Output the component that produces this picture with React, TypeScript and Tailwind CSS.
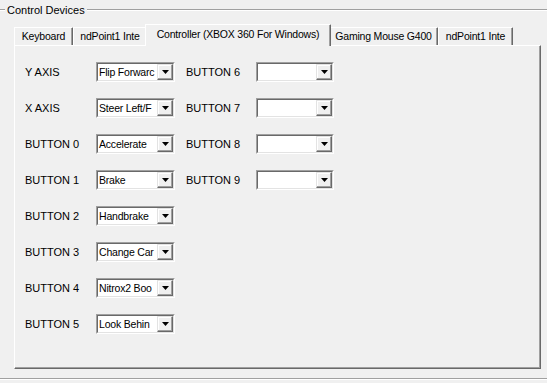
import React from 'react';

type Row = { label: string; value: string };

const LEFT_ROWS: Row[] = [
  { label: 'Y AXIS', value: 'Flip Forwarc' },
  { label: 'X AXIS', value: 'Steer Left/F' },
  { label: 'BUTTON 0', value: 'Accelerate' },
  { label: 'BUTTON 1', value: 'Brake' },
  { label: 'BUTTON 2', value: 'Handbrake' },
  { label: 'BUTTON 3', value: 'Change Car' },
  { label: 'BUTTON 4', value: 'Nitrox2 Boo' },
  { label: 'BUTTON 5', value: 'Look Behin' },
];

const RIGHT_ROWS: Row[] = [
  { label: 'BUTTON 6', value: '' },
  { label: 'BUTTON 7', value: '' },
  { label: 'BUTTON 8', value: '' },
  { label: 'BUTTON 9', value: '' },
];

const TABS = [
  { label: 'Keyboard', width: 'w-[59px]' },
  { label: 'ndPoint1 Inte', width: 'w-[74px]' },
  { label: 'Controller (XBOX 360 For Windows)', width: 'w-[186px]', active: true },
  { label: 'Gaming Mouse G400', width: 'w-[109px]' },
  { label: 'ndPoint1 Inte', width: 'w-[75px]' },
];

function Combo({ value, width }: { value: string; width: string }) {
  return (
    <div
      className={`${width} h-[20px] flex bg-white border-t border-l border-t-[#a0a0a0] border-l-[#a0a0a0] border-b border-r border-b-white border-r-white`}
    >
      <div className="flex-1 flex min-w-0 border-t border-l border-t-[#696969] border-l-[#696969] border-b border-r border-b-[#e3e3e3] border-r-[#e3e3e3]">
        <span className="flex-1 min-w-0 overflow-hidden whitespace-nowrap pl-[1px] leading-[16px] text-[10.5px] tracking-[-0.2px] text-black">
          {value}
        </span>
        <div className="w-[16px] h-[16px] flex items-center justify-center bg-[#f0f0f0] border-t border-l border-t-[#e3e3e3] border-l-[#e3e3e3] border-b border-r border-b-[#696969] border-r-[#696969] shadow-[inset_-1px_-1px_0_#a0a0a0,inset_1px_1px_0_#ffffff]">
          <svg width="7" height="4" viewBox="0 0 7 4">
            <path d="M0 0h7L3.5 4z" fill="#000" />
          </svg>
        </div>
      </div>
    </div>
  );
}

function EtchedLine({ className = '' }: { className?: string }) {
  return <div className={`h-[2px] border-t border-t-[#a0a0a0] border-b border-b-white ${className}`} />;
}

export default function App() {
  return (
    <div
      className="w-[547px] h-[383px] overflow-hidden bg-[#f0f0f0] text-[11px] text-black"
      style={{ fontFamily: '"Liberation Sans", Arial, sans-serif' }}
    >
      {/* Group box header */}
      <div className="flex items-center h-[20px]">
        <EtchedLine className="w-[5px]" />
        <span className="px-[2px] leading-[20px]">Control Devices</span>
        <EtchedLine className="flex-1" />
      </div>

      {/* Tabs */}
      <div className="ml-[14px] mt-[4px] flex items-end h-[21px] text-[10.5px] tracking-[-0.2px]">
        {TABS.map((tab, i) =>
          tab.active ? (
            <div
              key={i}
              className={`${tab.width} -mx-[2px] h-[22px] -mb-[1px] relative z-10 flex items-start justify-center pt-[3px] bg-[#f0f0f0] border-l border-t border-l-white border-t-white border-r border-r-[#696969] shadow-[inset_-1px_0_0_#a0a0a0] rounded-tr-[1px]`}
            >
              <span className="whitespace-nowrap leading-[13px]">{tab.label}</span>
            </div>
          ) : (
            <div
              key={i}
              className={`${tab.width} h-[18px] flex items-start justify-center pt-[2px] border-l border-t border-l-white border-t-white border-r border-r-[#696969] shadow-[inset_-1px_0_0_#a0a0a0] rounded-tr-[1px]`}
            >
              <span className="whitespace-nowrap leading-[13px]">{tab.label}</span>
            </div>
          )
        )}
      </div>

      {/* Tab panel */}
      <div className="ml-[14px] w-[527px] h-[324px] border-l border-t border-l-white border-t-white border-r border-b border-r-[#696969] border-b-[#696969] shadow-[inset_-1px_-1px_0_#a0a0a0] pl-[10px] pt-[16px] flex gap-[11px]">
        <div className="flex flex-col gap-[16px]">
          {LEFT_ROWS.map((row) => (
            <div key={row.label} className="flex items-center h-[20px]">
              <span className="w-[71px] whitespace-nowrap">{row.label}</span>
              <Combo value={row.value} width="w-[79px]" />
            </div>
          ))}
        </div>
        <div className="flex flex-col gap-[16px]">
          {RIGHT_ROWS.map((row) => (
            <div key={row.label} className="flex items-center h-[20px]">
              <span className="w-[70px] whitespace-nowrap">{row.label}</span>
              <Combo value={row.value} width="w-[78px]" />
            </div>
          ))}
        </div>
      </div>

      {/* Group box bottom */}
      <EtchedLine className="mt-[9px]" />
    </div>
  );
}
